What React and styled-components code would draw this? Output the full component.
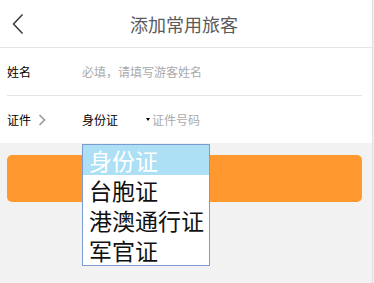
import styled, { createGlobalStyle } from "styled-components";

const Global = createGlobalStyle`
  html, body {
    margin: 0;
    padding: 0;
    background: #f2f2f2;
    font-family: "Noto Sans CJK SC", "Liberation Sans", sans-serif;
  }
`;

const Page = styled.div`
  position: relative;
  width: 372px;
  min-height: 283px;
  border-right: 1px solid #e0e0e0;
  background: #f2f2f2;
`;

const Header = styled.div`
  position: relative;
  height: 47px;
  background: #fff;
  border-bottom: 1px solid #e6e6e6;
  display: flex;
  align-items: center;
  justify-content: center;
`;

const Back = styled.svg`
  position: absolute;
  left: 12px;
  top: 13px;
`;

const Title = styled.h1`
  margin: 0 4px 0 0;
  font-size: 18px;
  font-weight: 400;
  color: #5a5a5a;
`;

const Form = styled.div`
  background: #fff;
`;

const Row = styled.div`
  height: 47px;
  margin: 0 10px 0 7px;
  display: flex;
  align-items: center;
  font-size: 12px;
  border-bottom: ${(p) => (p.$last ? "none" : "1px solid #e6e6e6")};
`;

const Label = styled.div`
  width: 75px;
  display: flex;
  align-items: center;
  gap: 7px;
  color: #000;
`;

const Hint = styled.span`
  color: #aaa;
`;

const Picked = styled.span`
  color: #000;
  width: 64px;
`;

const Caret = styled.span`
  width: 0;
  height: 0;
  border-left: 2px solid transparent;
  border-right: 2px solid transparent;
  border-top: 3px solid #000;
  margin-right: 2px;
`;

const Save = styled.button`
  display: block;
  width: 355px;
  height: 47px;
  margin: 12px 10px 0 7px;
  border: 0;
  border-radius: 5px;
  background: #ff982f;
  color: #fff;
  font-family: inherit;
  font-size: 16px;
`;

const Options = styled.ul`
  position: absolute;
  left: 82px;
  top: 144px;
  width: 126px;
  margin: 0;
  padding: 0;
  list-style: none;
  background: #fff;
  border: 1px solid #7b9bd1;
`;

const Option = styled.li`
  height: 30px;
  line-height: 30px;
  padding-left: 6px;
  font-size: 23px;
  white-space: nowrap;
  color: ${(p) => (p.$active ? "#fff" : "#111")};
  background: ${(p) => (p.$active ? "#ade0f5" : "#fff")};
`;

const types = ["身份证", "台胞证", "港澳通行证", "军官证"];

export default function App() {
  return (
    <Page>
      <Global />
      <Header>
        <Back width="12" height="22" viewBox="0 0 12 22">
          <polyline points="10.5,1.5 1.5,11 10.5,20.5" fill="none" stroke="#333" strokeWidth="1.4" />
        </Back>
        <Title>添加常用旅客</Title>
      </Header>
      <Form>
        <Row>
          <Label>姓名</Label>
          <Hint>必填，请填写游客姓名</Hint>
        </Row>
        <Row $last>
          <Label>
            证件
            <svg width="8" height="12" viewBox="0 0 8 12">
              <polyline points="1.5,1 6.5,6 1.5,11" fill="none" stroke="#999" strokeWidth="1.6" />
            </svg>
          </Label>
          <Picked>身份证</Picked>
          <Caret />
          <Hint>证件号码</Hint>
        </Row>
      </Form>
      <Save>保存</Save>
      <Options>
        {types.map((t, i) => (
          <Option key={t} $active={i === 0}>{t}</Option>
        ))}
      </Options>
    </Page>
  );
}
